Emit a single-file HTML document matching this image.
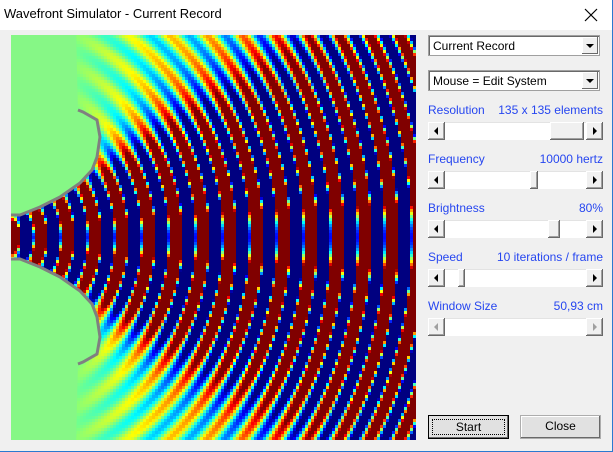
<!DOCTYPE html>
<html><head><meta charset="utf-8"><style>
*{margin:0;padding:0;box-sizing:border-box}
body{width:613px;height:452px;overflow:hidden;background:#f0f0f0;font-family:"Liberation Sans",sans-serif;font-size:12px;position:relative}
#tb{position:absolute;left:0;top:0;width:613px;height:30px;background:#fff}
#tb span{position:absolute;left:4px;top:6px;font-size:13px;color:#000}
#frame{position:absolute;right:0;top:0;width:1px;height:452px;background:#2b79d0}
#fb{position:absolute;left:0;bottom:0;width:613px;height:1px;background:#2b79d0}
canvas{position:absolute;left:11px;top:35px;width:405px;height:405px;image-rendering:pixelated}
svg.ov{position:absolute;left:0;top:0}
.combo{position:absolute;left:428px;width:172px;height:21px;background:#fff;border:1px solid #a0a0a0;box-shadow:inset 1px 1px #696969}
.combo span{position:absolute;left:4px;top:3px;font-size:12px}
.combo i{position:absolute;right:1px;top:1px;width:16px;height:17px;background:#f0f0f0;border-right:1px solid #696969;border-bottom:1px solid #696969;box-shadow:inset 1px 1px #fff}
.combo i:after{content:"";position:absolute;left:4px;top:7px;border-left:4px solid transparent;border-right:4px solid transparent;border-top:4px solid #000}
.lbl{position:absolute;left:428px;width:175px;color:#2646f0;font-size:12px}
.lbl b{font-weight:normal;position:absolute;right:0;top:0}
.sb{position:absolute;left:428px;width:175px;height:18px;background:#fff;border-top:1px solid #e3e3e3}
.ar{position:absolute;top:-1px;width:17px;height:18px;background:#f0f0f0;border-right:1px solid #696969;border-bottom:1px solid #696969;box-shadow:inset 1px 1px #fff,inset -1px -1px #a0a0a0}
.ar.l{left:0}.ar.r{right:0}
.ar.l:after{content:"";position:absolute;left:6px;top:5px;border-top:4px solid transparent;border-bottom:4px solid transparent;border-right:4px solid #000}
.ar.r:after{content:"";position:absolute;left:7px;top:5px;border-top:4px solid transparent;border-bottom:4px solid transparent;border-left:4px solid #000}
.dis .ar:after{border-right-color:#a0a0a0;border-left-color:#a0a0a0}
.th{position:absolute;top:-1px;height:18px;background:#f0f0f0;border-right:1px solid #696969;border-bottom:1px solid #696969;box-shadow:inset 1px 1px #fff,inset -1px -1px #a0a0a0}
.btn{position:absolute;top:415px;height:24px;width:81px;background:#e1e1e1;border:1px solid #adadad;text-align:center;line-height:21px;font-size:12px;box-shadow:inset -1px -1px #696969,inset 1px 1px #fff}
#start{left:428px;border:1px solid #000;box-shadow:inset -1px -1px #696969}
#start span{position:absolute;left:3px;top:3px;right:3px;bottom:3px;border:1px dotted #000;line-height:15px}
</style></head><body>
<div id="tb"><span>Wavefront Simulator - Current Record</span>
<svg style="position:absolute;left:584px;top:8px" width="14" height="14"><path d="M1 1L13 13M13 1L1 13" stroke="#000" stroke-width="1.2"/></svg></div>
<canvas id="c" width="135" height="135"></canvas>
<svg class="ov" width="613" height="452">
<polygon fill="#86f786" points="11,35 76,35 78,110 83,112 97,120 100,137 97,157 92,170 80,183 60,197 40,207 20,215 11,215"/>
<polygon fill="#86f786" points="11,440 76,440 78,364 83,362 97,354 100,337 97,317 92,304 80,291 60,277 40,267 20,259 11,259"/>
<polyline fill="none" stroke="#808080" stroke-width="3" points="78,110 83,112 97,120 100,137 97,157 92,170 80,183 60,197 40,207 20,215 11,215"/>
<polyline fill="none" stroke="#808080" stroke-width="3" points="78,364 83,362 97,354 100,337 97,317 92,304 80,291 60,277 40,267 20,259 11,259"/>
</svg>
<div class="combo" style="top:35px"><span>Current Record</span><i></i></div>
<div class="combo" style="top:70px"><span>Mouse = Edit System</span><i></i></div>
<div class="lbl" style="top:103px">Resolution<b>135 x 135 elements</b></div>
<div class="sb" style="top:122px"><div class="ar l"></div><div class="th" style="left:122px;width:34px"></div><div class="ar r"></div></div>
<div class="lbl" style="top:152px">Frequency<b>10000 hertz</b></div>
<div class="sb" style="top:171px"><div class="ar l"></div><div class="th" style="left:102px;width:8px"></div><div class="ar r"></div></div>
<div class="lbl" style="top:201px">Brightness<b>80%</b></div>
<div class="sb" style="top:220px"><div class="ar l"></div><div class="th" style="left:120px;width:12px"></div><div class="ar r"></div></div>
<div class="lbl" style="top:250px">Speed<b>10 iterations / frame</b></div>
<div class="sb" style="top:269px"><div class="ar l"></div><div class="th" style="left:30px;width:7px"></div><div class="ar r"></div></div>
<div class="lbl" style="top:299px">Window Size<b>50,93 cm</b></div>
<div class="sb dis" style="top:318px"><div class="ar l"></div><div class="ar r"></div></div>
<div class="btn" id="start"><span>Start</span></div>
<div class="btn" style="left:520px">Close</div>
<div id="frame"></div><div id="fb"></div>
<script>
var c=document.getElementById('c'),g=c.getContext('2d'),im=g.createImageData(135,135),d=im.data;
function cl(v){return v<0?0:v>1?1:v}
for(var j=0;j<135;j++)for(var i=0;i<135;i++){
 var x=11+i*3+1.5,y=35+j*3+1.5,dx=x+20,dy=y-237,r=Math.sqrt(dx*dx+dy*dy),ct=dx/r;
 var amp=0.35*cl((x-70)/90)+6*Math.pow(ct,14);
 var s=amp*Math.sin(2*Math.PI*r/27);
 if(s>1)s=1;if(s<-1)s=-1;
 var v=0.5+0.5*s;
 var k=(j*135+i)*4;
 d[k]=255*cl(1.5-Math.abs(4*v-3));d[k+1]=255*cl(1.5-Math.abs(4*v-2));d[k+2]=255*cl(1.5-Math.abs(4*v-1));d[k+3]=255;
}
g.putImageData(im,0,0);
</script>
</body></html>
